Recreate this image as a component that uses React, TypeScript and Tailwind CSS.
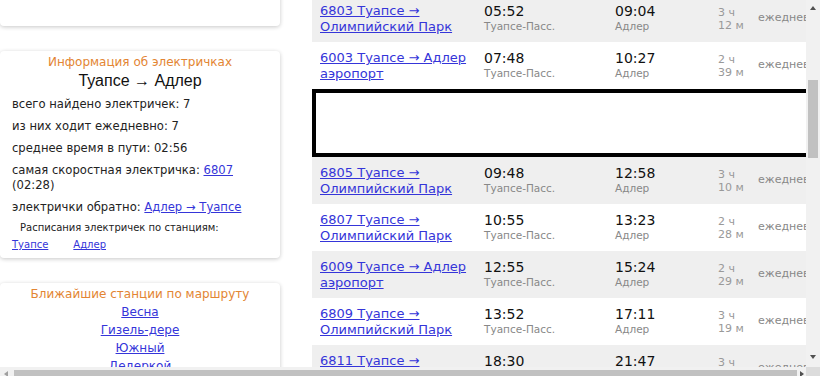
import React from "react"

const trains = [
  { name: "6803 Туапсе → Олимпийский Парк", dep: "05:52", arr: "09:04", h: "3 ч", m: "12 м", grey: true },
  { name: "6003 Туапсе → Адлер аэропорт", dep: "07:48", arr: "10:27", h: "2 ч", m: "39 м", grey: false },
  { ad: true },
  { name: "6805 Туапсе → Олимпийский Парк", dep: "09:48", arr: "12:58", h: "3 ч", m: "10 м", grey: true },
  { name: "6807 Туапсе → Олимпийский Парк", dep: "10:55", arr: "13:23", h: "2 ч", m: "28 м", grey: false },
  { name: "6009 Туапсе → Адлер аэропорт", dep: "12:55", arr: "15:24", h: "2 ч", m: "29 м", grey: true },
  { name: "6809 Туапсе → Олимпийский Парк", dep: "13:52", arr: "17:11", h: "3 ч", m: "19 м", grey: false },
  { name: "6811 Туапсе → Олимпийский Парк", dep: "18:30", arr: "21:47", h: "3 ч", m: "16 м", grey: true },
]

const box = "bg-white rounded-[4px] shadow-[0_1px_4px_rgba(0,0,0,0.22)]"
const link = "text-[#3535d9] underline"

function TrainRow({ t }: { t: any }) {
  return (
    <div
      className={`grid grid-cols-[164px_131px_103px_40px_1fr] h-[47px] pl-2 overflow-hidden ${
        t.grey ? "bg-[#efefef]" : "bg-white"
      }`}
    >
      <div className="pt-2 pr-3 text-[13px] leading-[16px]">
        <a href="#" className={link}>
          {t.name}
        </a>
      </div>
      <div className="pt-2">
        <div className="text-[14px] leading-[16px] text-[#111]">{t.dep}</div>
        <div className="text-[10.5px] leading-[14px] text-[#888]">Туапсе-Пасс.</div>
      </div>
      <div className="pt-2">
        <div className="text-[14px] leading-[16px] text-[#111]">{t.arr}</div>
        <div className="text-[10.5px] leading-[14px] text-[#888]">Адлер</div>
      </div>
      <div className="pt-[11px] text-[11px] leading-[13px] text-[#999]">
        <div>{t.h}</div>
        <div>{t.m}</div>
      </div>
      <div className="self-center text-[11px] text-[#888] whitespace-nowrap">ежедневно</div>
    </div>
  )
}

export default function App() {
  return (
    <div className="relative w-[820px] h-[376px] overflow-hidden bg-white font-['DejaVu_Sans',Verdana,sans-serif] text-[#222]">
      <div className="flex gap-8">
        {/* left column */}
        <div className="w-[280px] shrink-0 flex flex-col gap-[25px]">
          <div className={`${box} h-[60px] -mt-[34px]`} />

          <div className={`${box} h-[207px] px-3 pt-[3px]`}>
            <div className="text-center text-[12px] leading-[16px] text-[#e38533]">Информация об электричках</div>
            <div className="text-center text-[16px] leading-[20px] mt-px text-[#111] font-['Liberation_Sans',Arial,sans-serif]">
              Туапсе → Адлер
            </div>
            <div className="mt-[6px] text-[11.6px] leading-[15px] flex flex-col gap-[7px]">
              <p>всего найдено электричек: 7</p>
              <p>из них ходит ежедневно: 7</p>
              <p>среднее время в пути: 02:56</p>
              <p>
                самая скоростная электричка:{" "}
                <a href="#" className={link}>
                  6807
                </a>
                <br />
                (02:28)
              </p>
              <p>
                электрички обратно:{" "}
                <a href="#" className={link}>
                  Адлер → Туапсе
                </a>
              </p>
            </div>
            <div className="mt-[6px] pl-2 text-[10px] leading-[14px]">Расписания электричек по станциям:</div>
            <div className="mt-[3px] flex gap-[25px] text-[10px] leading-[14px]">
              <a href="#" className={link}>
                Туапсе
              </a>
              <a href="#" className={link}>
                Адлер
              </a>
            </div>
          </div>

          <div className={`${box} h-[120px] pt-[3px] text-center`}>
            <div className="text-[12px] leading-[16px] text-[#e38533]">Ближайшие станции по маршруту</div>
            <div className="mt-px flex flex-col text-[12px] leading-[18px]">
              {["Весна", "Гизель-дере", "Южный", "Дедеркой"].map((s) => (
                <div key={s}>
                  <a href="#" className={link}>
                    {s}
                  </a>
                </div>
              ))}
            </div>
          </div>
        </div>

        {/* right column */}
        <div className="w-[494px] shrink-0 -mt-[5px]">
          {trains.map((t, i) =>
            t.ad ? (
              <div key={i} className="h-[68px] w-[498px] border-4 border-black bg-white" />
            ) : (
              <TrainRow key={i} t={t} />
            )
          )}
        </div>
      </div>

      {/* vertical scrollbar */}
      <div className="absolute right-0 top-0 w-[14px] h-[367px] bg-[#f1f1f1]">
        <div className="absolute left-[4px] top-[6px] w-0 h-0 border-l-[3px] border-r-[3px] border-b-[4px] border-l-transparent border-r-transparent border-b-[#505050]" />
        <div className="absolute left-[2px] top-[80px] w-[10px] h-[78px] bg-[#c1c1c1]" />
        <div className="absolute left-[4px] top-[355px] w-0 h-0 border-l-[3px] border-r-[3px] border-t-[4px] border-l-transparent border-r-transparent border-t-[#505050]" />
      </div>

      {/* horizontal scrollbar */}
      <div className="absolute left-0 bottom-0 w-[806px] h-[9px] bg-[#f1f1f1]">
        <div className="absolute left-[14px] top-[3px] w-[783px] h-[6px] bg-[#c1c1c1]" />
        <div className="absolute left-[4px] top-[4px] w-0 h-0 border-t-[3px] border-b-[3px] border-r-[4px] border-t-transparent border-b-transparent border-r-[#a0a0a0]" />
        <div className="absolute left-[800px] top-[4px] w-0 h-0 border-t-[3px] border-b-[3px] border-l-[4px] border-t-transparent border-b-transparent border-l-[#505050]" />
      </div>
      <div className="absolute right-0 bottom-0 w-[14px] h-[9px] bg-[#dcdcdc]" />
    </div>
  )
}
